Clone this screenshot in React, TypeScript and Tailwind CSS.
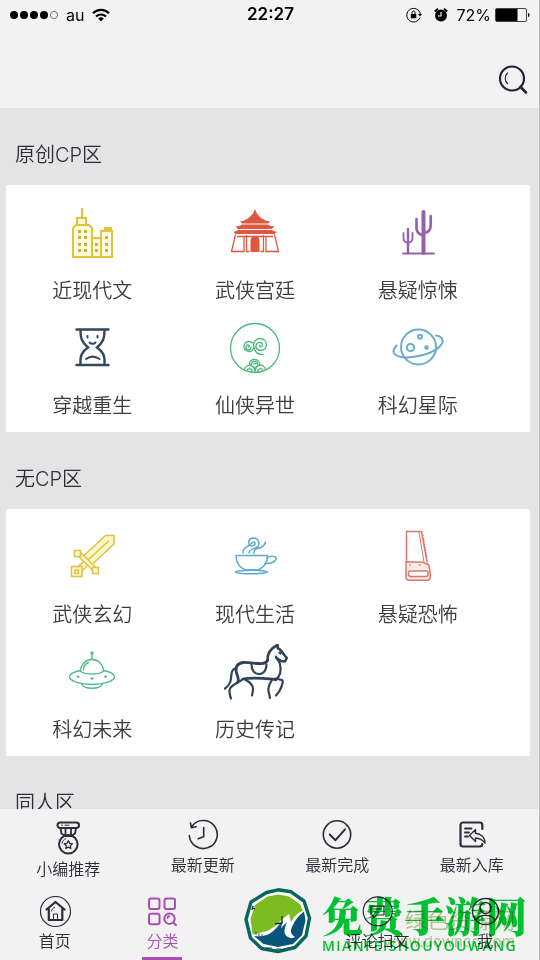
import type { ReactNode } from "react"

const Buildings = () => (
  <g stroke="#dfc43c" strokeWidth="2" fill="#fffbe0">
    <path d="M22 2v10" />
    <path d="M17 19v-7h9v7" />
    <path d="M13 51V22l3-3h13l3 3v29z" />
    <path d="M32 32h9v19h-9z" />
    <path d="M41 25h11v26H41z" />
    <path d="M45 22h6v3h-6z" fill="#dfc43c" />
    <g stroke="none" fill="#cdb23a">
      {[24, 30, 37, 43].map((y) => (
        <path key={y} d={`M18 ${y}h3v3h-3zM24 ${y}h3v3h-3z`} />
      ))}
      <path d="M35 37h3v3h-3zM35 43h3v3h-3zM45 30h3v3h-3zM45 37h3v3h-3zM45 43h3v3h-3z" />
    </g>
  </g>
)

const Temple = () => (
  <g fill="#e0573f">
    <path d="M32 3l1.6 4c3 4.500 7 7.500 13.500 8.500l-2 2H19l-2-2C23 14.500 27.500 11.500 30.400 7z" />
    <path d="M19 18.500h26c2 1.500 4 2 6.500 1.800L49 23H15l-2.500-2.700c2.500 0 4.500-.3 6.500-1.800z" />
    <path d="M15 24h34c1.500 1.200 3 1.700 5 1.800L51.500 28h-39L10 25.800c2-.1 3.500-.6 5-1.800z" />
    <path d="M27.500 46V34.500a4.500 4.500 0 0 1 9 0V46z" />
    <g fill="none" stroke="#e0573f" strokeWidth="1.300">
      <path d="M12.500 28.500L8.500 45.500H21V31M51.500 28.500l4 17H43V31" />
      <path d="M23.500 29v16.500h3M40.500 29v16.500h-3M14 30.500h36" />
    </g>
  </g>
)

const Cactus = () => (
  <g stroke="#9560b0" fill="none" strokeLinecap="round">
    <path d="M17 47.500h31" strokeWidth="1.800" />
    <path d="M37.500 6v41" strokeWidth="4" />
    <path d="M30.500 13v9c0 4.500 2.500 6.500 7 7.500M44.700 10v9.500c0 4.500-2.500 7-7 7.500" strokeWidth="2.600" />
    <path d="M22 23v24" strokeWidth="2.400" />
    <path d="M17.500 27v5c0 3.500 2 4.500 4.500 5M26.500 27v5c0 3.500-2 4.500-4.500 5" strokeWidth="1.800" />
  </g>
)

const Hourglass = () => (
  <g stroke="#33475b" fill="none" strokeWidth="2.400" strokeLinecap="round">
    <path d="M16.500 8.500h32M16.500 44h32" />
    <path d="M20.500 10c0 7 1 11 7.500 16.500-6 4-8 8-7.500 16.500M44.500 10c0 7-1 11-7.500 16.500 6 4 8 8 7.500 16.500" />
    <path d="M27.500 15v1.500M37.500 15v1.500M29.500 21.500c2 1.800 4.500 1.800 6 0M26 38c4-3 9-3 13.500 0" strokeWidth="2" />
  </g>
)

const Clouds = () => (
  <g stroke="#4cb97c" fill="none" strokeWidth="1.300" strokeLinecap="round">
    <circle cx="32" cy="27" r="24.500" />
    <path d="M30.500 27.500a5 5 0 1 1-1-5.500M28 26.500a2.500 2.500 0 1 1-2.800-2.700c1.500 0 1.800 2 .3 2.200M31 27c-1.500-6 2-9.500 6-9.500s6.500 3 6.500 6.200-2.500 5.800-6 5.800-5-3-4.500-5 2.500-3.500 4.500-3 2.500 2.500 1.500 3.700-2.500.3-2.300-.7M31 26c1 5 4 8 9 7.500" />
    <path d="M26.500 43a5 4.500 0 0 1 10 0M28.500 43a3 2.700 0 0 1 6 0M30.500 43a1.400 1.200 0 0 1 2.500 0" />
    <path d="M21.500 48.500a5 5 0 0 1 10 1.500M24 49.500a2.800 2.800 0 0 1 5.400 1M42.500 48.500a5 5 0 0 0-10 1.500M40 49.500a2.800 2.800 0 0 0-5.400 1M26.500 43l5.500 4 5-4" />
  </g>
)

const Planet = () => (
  <g stroke="#6baccd" fill="none" strokeWidth="2" strokeLinecap="round">
    <circle cx="32.500" cy="26" r="17.500" />
    <path d="M10.500 24.500C7 28.500 6.500 31.500 9 33.500c5 4 17 3.500 28 .5 9.500-2.600 16.500-7 19-11.500 2-4-.5-7.500-6-8" />
    <circle cx="24.500" cy="26.500" r="3.600" />
    <circle cx="34" cy="15.700" r="2" />
    <circle cx="40.500" cy="26.500" r="1.300" />
  </g>
)

const Sword = () => (
  <g stroke="#dcc04a" fill="#fff8c4" strokeWidth="1.500">
    <path d="M23.500 26L45.500 5.500H54V14L31.500 35z" />
    <path d="M49 10.500L28 30" />
    <path d="M24 31l-6 6 4 4 6-6z" />
    <path d="M17.500 25.500l3-3 16 15.500-3 3z" />
    <path d="M14.500 20.500h6v6h-6zM32.500 37.500h6v6h-6zM11.500 36.500h10.500v10H11.500z" />
    <path d="M15 40h3.500v3.500H15z" />
  </g>
)

const Cup = () => (
  <g stroke="#5ba8cf" fill="none" strokeWidth="1.400" strokeLinecap="round">
    <path d="M13 25.500h31.500c0 7-3.500 12-9.500 14.500H22.500C16.500 37.500 13 32.500 13 25.500z" />
    <path d="M44 28c3-2.500 8.500-2.500 9 0 .5 3.500-5 6-11 5.500" />
    <ellipse cx="28.500" cy="42" rx="16" ry="1.800" />
    <path d="M20 23c-1-5 4-5.500 6.500-8 3-3 4.500-4 5.500-2 .6 2-2 3.500-4.500 2.500-3.500-2-2-7.500 3-7.500 5 .2 6.500 5 4.500 8.500-1.800 2.500-8.500 1.500-9 6.500M31 23.500c-.5-6 4-4.500 7-6 2.500-1.300 4-3 4.500-5.500" />
  </g>
)

const Saw = () => (
  <g stroke="#d9786a" fill="none" strokeWidth="1.500" strokeLinejoin="round">
    <path d="M20.500 32V1.500h15l5.700 31" />
    <path d="M33 2l5 30" strokeWidth="1" />
    <path d="M37 5l1 5.500 1 5.500 1 5.500 1 5.500" strokeDasharray="1 2" />
    <path d="M20 32h15.500c2 0 3 1.500 5 1.800 2 .2 2.500 1.200 2.800 3.200l1.200 8.500c.3 3-1 4.800-4 4.800H23c-2 0-3-1-3-3z" fill="#fdeae6" />
    <rect x="22.500" y="41" width="19.500" height="5.500" rx="2" fill="#fff" />
    <path d="M23 35h1.500M33 35h1.500" />
  </g>
)

const Ufo = () => (
  <g stroke="#50b98b" fill="none" strokeWidth="1.400" strokeLinecap="round">
    <path d="M32 9v5" />
    <circle cx="32" cy="8" r="1" fill="#50b98b" />
    <path d="M20.500 26.500C20.500 19 26 14.500 32 14.500s11.500 4.500 11.500 12c-6 3.500-17 3.500-23 0zM23.500 25c0-4 2.500-6.500 5-7.500" />
    <path d="M20.500 25.500C13 27 9.500 29.500 9.500 32c0 3.500 10 7.500 22.500 7.500S54.500 35.500 54.500 32c0-2.500-3.500-5-11-6.500" />
    <path d="M21.500 39c1 2.500 5 4.300 10.500 4.300S41.500 41.500 42.500 39" />
    <g fill="#50b98b" strokeWidth="1">
      <circle cx="18" cy="31.700" r=".9" />
      <circle cx="32" cy="33.500" r=".9" />
      <circle cx="45.500" cy="31.700" r=".9" />
    </g>
  </g>
)

const Horse = () => (
  <g stroke="#2f4257" fill="none" strokeWidth="2.200" strokeLinecap="round" strokeLinejoin="round">
    <path d="M44.500 15.500C44 9 47.500 3.500 54.500 0l.5 3.500c2.500.5 4 3 5.500 5.500l3.300 4-1.800 3.500-4-.5-4.500-3" strokeWidth="2.600" />
    <path d="M53 11.500c1 4 4 4.500 4 8 1.500 6 1 11-4.500 15.500M56.500 7.500l1 1" />
    <path d="M44.500 15.500c-2 3.500-5 3.500-9 3-6 0-11-1.500-15.500-1-6 .8-8 5-6.500 10.500 1 3 2.500 5 1.500 9" strokeWidth="2.800" />
    <path d="M28.500 19.500c0 5.500 3 9.500 7.500 9.500s7.500-4 7.500-9.500" />
    <path d="M20 34c10-2 22-.5 33 .5" strokeWidth="2.800" />
    <path d="M13 23c-5 1.500-4.500 6-5 10.500-.4 4.500-2.500 7.500-6 10" />
    <path d="M20 34c-4 3.500-10 5-13 9.500-1 3-.5 6 1 10M22 34.500c4 2 8 5 8 9.500 0 3-.7 4.500-1 6.500" />
    <path d="M49 35c-3 4.500-4 8-3.500 11l1.500 7M52 33.500l7 1.500c1.500 1 .5 3 0 5-1 4-3 7-6 10.500" />
  </g>
)

const sections = [
  {
    title: "原创CP区",
    items: [
      { label: "近现代文", Icon: Buildings },
      { label: "武侠宫廷", Icon: Temple },
      { label: "悬疑惊悚", Icon: Cactus },
      { label: "穿越重生", Icon: Hourglass },
      { label: "仙侠异世", Icon: Clouds },
      { label: "科幻星际", Icon: Planet },
    ],
  },
  {
    title: "无CP区",
    items: [
      { label: "武侠玄幻", Icon: Sword },
      { label: "现代生活", Icon: Cup },
      { label: "悬疑恐怖", Icon: Saw },
      { label: "科幻未来", Icon: Ufo },
      { label: "历史传记", Icon: Horse },
    ],
  },
  { title: "同人区", items: [] },
]

function LineIcon({ children, tall = false }: { children: ReactNode; tall?: boolean }) {
  return (
    <svg
      viewBox={tall ? "0 0 32 36" : "0 0 32 32"}
      className={tall ? "w-8 h-9" : "w-8 h-8"}
      fill="none"
      stroke="currentColor"
      strokeWidth="1.600"
      strokeLinecap="round"
      strokeLinejoin="round"
      aria-hidden="true"
    >
      {children}
    </svg>
  )
}

const shortcuts = [
  {
    label: "小编推荐",
    icon: (
      <LineIcon tall>
        <rect x="5.500" y="3.500" width="21.500" height="5.500" rx="2.700" strokeWidth="2" />
        <path d="M8.500 9.500l1 5 3.500 2.500h6.500l3.500-2.500 1-5M13.500 9.500V16M19 9.500V16" strokeWidth="1.800" />
        <circle cx="16.300" cy="25.300" r="9.300" strokeWidth="2" />
        <path d="M16.300 21.800l1.300 2.500 2.700.4-2 2 .5 2.800-2.500-1.300-2.500 1.300.5-2.800-2-2 2.700-.4z" strokeWidth="1.300" />
        <path d="M10 24c.5-2 1.700-3.500 3.500-4.300M9.500 6.200h1M13 6.200h4" strokeWidth="1" />
      </LineIcon>
    ),
  },
  {
    label: "最新更新",
    icon: (
      <LineIcon>
        <path d="M2.300 16.500A14 14 0 1 0 5 7.200M3.500 4l.8 4.700 4.700-1M16.700 8.500v9.200l-5.500 2" />
      </LineIcon>
    ),
  },
  {
    label: "最新完成",
    icon: (
      <LineIcon>
        <circle cx="16" cy="15.500" r="13.700" />
        <path d="M8.700 15.500l5.800 5.700L24 10.300" strokeWidth="2" />
      </LineIcon>
    ),
  },
  {
    label: "最新入库",
    icon: (
      <LineIcon>
        <path d="M26.300 10V6a2.500 2.500 0 0 0-2.500-2.500H7A2.500 2.500 0 0 0 4.500 6v19A2.500 2.500 0 0 0 7 27.500h16.800c1.500 0 2.500-1 2.500-2.500" strokeWidth="2.200" />
        <path d="M9 9.500h6.500M9 13.500h4M9 17.500h3" strokeWidth="1.800" />
        <path d="M13.500 16.500l6-6v3.700c5.500.5 9.500 4 9.500 10-2.500-3.500-5-5-9.500-5.200v3.500z" strokeWidth="1.400" />
      </LineIcon>
    ),
  },
]

const tabs = [
  {
    label: "首页",
    icon: (
      <LineIcon>
        <circle cx="16.500" cy="15.500" r="15" strokeWidth="1.200" />
        <path d="M7.500 13.500l9-7.500 9 7.500M9.800 13v11h13.500V13" strokeWidth="2.200" />
        <path d="M14.500 23.500V18h4v5.500M12.500 15c.3-2 1.500-3 3-3.500" strokeWidth="1" />
      </LineIcon>
    ),
  },
  {
    label: "分类",
    active: true,
    icon: (
      <LineIcon>
        <g strokeWidth="2">
          <rect x="3" y="2.500" width="10.500" height="10.500" rx="2" />
          <rect x="18.500" y="2.500" width="10.500" height="10.500" rx="2" />
          <rect x="3" y="17.700" width="10.500" height="10.500" rx="2" />
          <circle cx="23.500" cy="22.700" r="5.200" />
          <path d="M27.500 26.700l2.500 2.500M21.500 22c.2-1 .8-1.500 1.700-1.700" />
        </g>
      </LineIcon>
    ),
  },
  { label: "", icon: null },
  {
    label: "评论扫文",
    icon: (
      <LineIcon>
        <circle cx="15.700" cy="15.300" r="14.500" strokeWidth="1.200" />
        <path d="M9 10h13v9h-7l-4 3v-3H9zM12 13h7M12 16h5" strokeWidth="1.200" />
      </LineIcon>
    ),
  },
  {
    label: "我",
    icon: (
      <LineIcon>
        <circle cx="16.500" cy="15.500" r="13" strokeWidth="1.400" />
        <circle cx="16.500" cy="12" r="5.500" strokeWidth="1.400" />
        <path d="M7.500 23.500c3-5.500 15-5.500 18 0" strokeWidth="1.400" />
      </LineIcon>
    ),
  },
]

function StatusBar() {
  return (
    <div className="grid grid-cols-[1fr_auto_1fr] items-center h-[30px] pl-[10px] pr-2 font-[Inter,sans-serif] font-normal text-base text-black">
      <div className="flex items-center gap-2">
        <svg viewBox="0 0 48 10" className="w-12 h-[10px]" aria-hidden="true">
          {[4, 14, 24, 34].map((cx) => (
            <circle key={cx} cx={cx} cy="5" r="4" />
          ))}
          <circle cx="44" cy="5" r="3.600" fill="none" stroke="#555" strokeWidth=".8" />
        </svg>
        <span>au</span>
        <svg viewBox="0 0 18 14" className="w-[18px] h-[14px]" fill="none" stroke="#000" strokeWidth="2.200" aria-hidden="true">
          <path d="M1 5.200a11.500 11.500 0 0 1 16 0M4 8.500a7.200 7.200 0 0 1 10 0" />
          <path d="M6.200 10.600a4 4 0 0 1 5.600 0L9 13.500z" fill="#000" stroke="none" />
        </svg>
      </div>
      <span className="text-[17px] font-semibold">22:27</span>
      <div className="flex items-center justify-end">
        <svg viewBox="0 0 16 16" className="w-4 h-4 mr-3" fill="none" stroke="#000" aria-hidden="true">
          <path d="M14 10.500A6.800 6.800 0 1 1 14.300 7" strokeWidth="1" />
          <path d="M12 7h4l-2 2.500z" fill="#000" stroke="none" />
          <rect x="4.800" y="7" width="5.500" height="4.300" fill="#000" stroke="none" />
          <path d="M6 7V5.500a1.500 1.500 0 0 1 3 0V7" strokeWidth="1" />
        </svg>
        <svg viewBox="0 0 14 16" className="w-[14px] h-4 mr-2" aria-hidden="true">
          <circle cx="7" cy="8.500" r="6" />
          <path d="M.7 4.500L4 1.700M13.300 4.500L10 1.700" stroke="#000" strokeWidth="1.800" />
          <path d="M7 5v4H4" stroke="#f2f2f2" strokeWidth="1.200" fill="none" />
        </svg>
        <span>72%</span>
        <svg viewBox="0 0 36 14" className="w-9 h-[14px] ml-1" aria-hidden="true">
          <rect x=".5" y=".5" width="31" height="13" rx="1.500" fill="none" stroke="#444" />
          <rect x="1" y="1" width="21.500" height="12" />
          <path d="M33 5c2 .3 2 3.700 0 4z" />
        </svg>
      </div>
    </div>
  )
}

function SiteLogo() {
  return (
    <svg viewBox="0 0 68 66" className="w-[68px] h-[66px]" aria-hidden="true">
      <path
        d="M22.500 4.500L34 1.800l13 2L60 13l5.500 17-3.500 18-11 11.500L34 63.500l-16.500-3L6.500 50 2 31.500 7 14z"
        fill="#fff"
        stroke="#04675e"
        strokeWidth="3.400"
        strokeLinejoin="round"
      />
      <path d="M23.500 8.500L34 6.500l11 2L56 16l3 7c-5 1-9 6-12 11l-2-8c-7 4-12 12-20 16-5 2.500-11 3-16.500 4.500L6.500 31 11 17z" fill="#7bbd20" />
      <path d="M60 23.500l1.500 9L58 47l-9 9-15 3-14.500-3-9.500-8c7 1 13 0 18-4 5-3.500 8-9 11-12l-2 8 6-6c-3 8-4 12 1 15 4 2 5 1 7 0-5-3-5-7-2-12 2-5 6-10 11-13.500z" fill="#075679" />
      <path d="M38 28v7l-7 1M9 18l-1 4M8 20l3 1" stroke="#15202a" strokeWidth="1.300" fill="none" />
      <path d="M12 47v-3M15 48v-3M18 48v-2M22 60h6M32 61h5" stroke="#15202a" strokeWidth=".8" fill="none" />
    </svg>
  )
}

export default function App() {
  return (
    <div className="flex flex-col h-screen bg-[#e4e4e4] border-r border-[#bdbdbd] font-['Inter','Noto_Sans_CJK_SC',sans-serif] font-[350] text-[#2c2c3a]">
      <header className="shrink-0 bg-[#f2f2f2] pb-[10px]">
        <StatusBar />
        <div className="flex justify-end pt-[34px] pr-[11px]">
          <button type="button" aria-label="搜索">
            <svg viewBox="0 0 30 34" className="w-[30px] h-[34px]" fill="none" stroke="#23233a" strokeLinecap="round" aria-hidden="true">
              <circle cx="14" cy="14.500" r="12" strokeWidth="2.200" />
              <path d="M22.500 23l5.500 5.500" strokeWidth="2.600" />
              <path d="M9.500 9c-3 3-3 8 0 10.500" strokeWidth="1.200" />
            </svg>
          </button>
        </div>
      </header>

      <main className="flex-1 min-h-0 overflow-y-auto [scrollbar-width:none]">
        {sections.map((section) => (
          <section key={section.title}>
            <h2 className="pt-[37px] pb-5 pl-[15px] text-xl leading-5">{section.title}</h2>
            {section.items.length > 0 && (
              <div className="ml-[6px] mr-[9px] grid grid-cols-3 gap-y-[17px] bg-white pt-[21px] pb-[13px] pl-[5px] pr-[31px]">
                {section.items.map(({ label, Icon }) => (
                  <button key={label} type="button" className="flex flex-col items-center gap-4">
                    <svg viewBox="0 0 64 56" className="w-16 h-14 overflow-visible" aria-hidden="true">
                      <Icon />
                    </svg>
                    <span className="text-xl leading-[26px] text-[#3c3c3c]">{label}</span>
                  </button>
                ))}
              </div>
            )}
          </section>
        ))}
      </main>

      <footer className="relative shrink-0 bg-[#f2f2f2]">
        <div className="grid grid-cols-4 items-start pt-[10px] pl-px">
          {shortcuts.map((item) => (
            <button key={item.label} type="button" className="flex flex-col items-center gap-[2px]">
              {item.icon}
              <span className="text-base leading-6">{item.label}</span>
            </button>
          ))}
        </div>

        <nav className="grid grid-cols-5 pt-[15px] pl-px">
          {tabs.map((tab, index) => (
            <a
              key={index}
              href="#"
              aria-label={tab.label || "更多"}
              className={`flex flex-col items-center gap-[3px] ${tab.active ? "text-[#a94fb4]" : ""}`}
            >
              {tab.icon}
              <span className="text-base leading-5">{tab.label}</span>
              <span className={`mt-[3px] h-[3px] w-10 ${tab.active ? "bg-[#a94fb4]" : ""}`} />
            </a>
          ))}
        </nav>

        {/* site watermarks lie over the tab bar */}
        <div className="pointer-events-none absolute right-6 bottom-2 text-right font-normal text-[#bccf98] mix-blend-multiply">
          <div className="text-[22px] leading-6">绿色资源网</div>
          <div className="text-[15px] leading-5">www.downcc.com</div>
        </div>
        <div className="pointer-events-none absolute right-[227px] bottom-[6px]">
          <SiteLogo />
        </div>
        <div className="pointer-events-none absolute right-3 bottom-[6px] text-[#00cc33] mix-blend-multiply">
          <div className="text-[41px] leading-[46px] font-black font-['Noto_Serif_CJK_SC','Noto_Sans_CJK_SC',serif]">免费手游网</div>
          <div className="text-[14px] leading-4 font-semibold tracking-widest font-['Open_Sans',sans-serif]">MIANFEISHOUYOUWANG</div>
        </div>
      </footer>
    </div>
  )
}
